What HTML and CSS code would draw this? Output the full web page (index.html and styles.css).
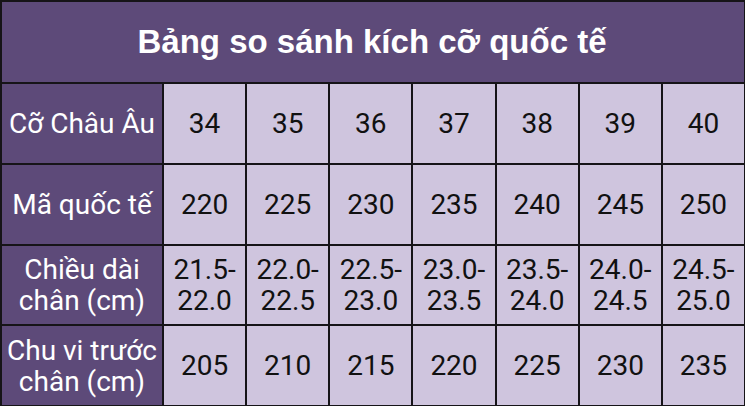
FILE: index.html
```html
<!DOCTYPE html>
<html lang="vi">
<head>
<meta charset="utf-8">
<title>Bảng so sánh kích cỡ quốc tế</title>
<link rel="stylesheet" href="styles.css">
</head>
<body>
<div class="table">
  <div class="title">Bảng so sánh kích cỡ quốc tế</div>

  <div class="head">Cỡ Châu Âu</div>
  <div class="cell">34</div><div class="cell">35</div><div class="cell">36</div><div class="cell">37</div><div class="cell">38</div><div class="cell">39</div><div class="cell">40</div>

  <div class="head">Mã quốc tế</div>
  <div class="cell">220</div><div class="cell">225</div><div class="cell">230</div><div class="cell">235</div><div class="cell">240</div><div class="cell">245</div><div class="cell">250</div>

  <div class="head">Chiều dài<br>chân (cm)</div>
  <div class="cell">21.5-<br>22.0</div><div class="cell">22.0-<br>22.5</div><div class="cell">22.5-<br>23.0</div><div class="cell">23.0-<br>23.5</div><div class="cell">23.5-<br>24.0</div><div class="cell">24.0-<br>24.5</div><div class="cell">24.5-<br>25.0</div>

  <div class="head">Chu vi trước<br>chân (cm)</div>
  <div class="cell">205</div><div class="cell">210</div><div class="cell">215</div><div class="cell">220</div><div class="cell">225</div><div class="cell">230</div><div class="cell">235</div>
</div>
</body>
</html>
```
FILE: styles.css
```css
html, body {
  margin: 0;
  padding: 0;
  background: #ffffff;
}
.table {
  width: 745px;
  height: 406px;
  box-sizing: border-box;
  display: grid;
  grid-template-columns: 160px repeat(7, 1fr);
  grid-template-rows: 80px repeat(4, 1fr);
  gap: 2px;
  padding: 2px 1px 1px 2px;
  background: #161418;
  font-family: Roboto, "Liberation Sans", sans-serif;
}
.title {
  grid-column: 1 / -1;
  background: #5d4a79;
  color: #ffffff;
  font-family: "Liberation Sans", Arial, sans-serif;
  font-weight: bold;
  font-size: 33px;
  padding-right: 2px;
  display: flex;
  align-items: center;
  justify-content: center;
}
.head {
  background: #5d4a79;
  color: #ffffff;
  font-size: 28px;
  line-height: 31px;
  display: flex;
  align-items: center;
  justify-content: center;
  text-align: center;
}
.cell {
  background: #cfc5de;
  color: #111111;
  font-size: 28px;
  line-height: 31px;
  display: flex;
  align-items: center;
  justify-content: center;
  text-align: center;
}
```
